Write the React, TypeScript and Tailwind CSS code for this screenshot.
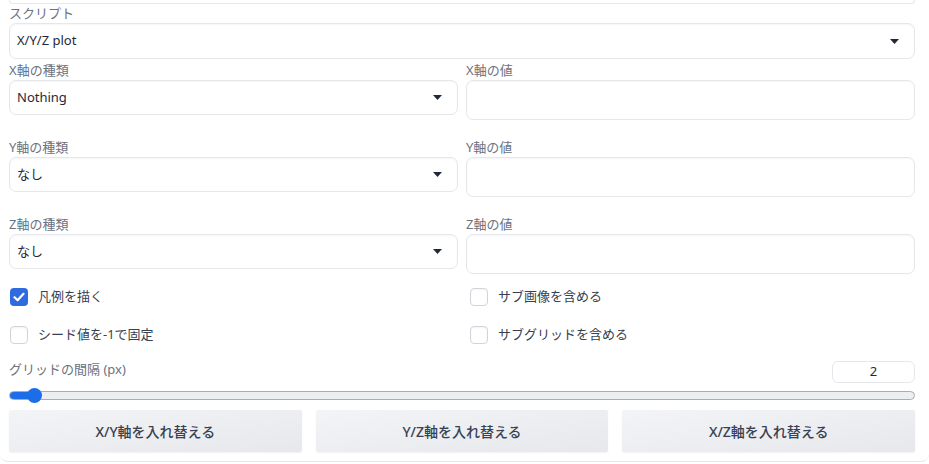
import { useState } from 'react'

const FONT = { fontFamily: '"Noto Sans", "Noto Sans CJK JP", sans-serif' }

// ── Small pieces ──────────────────────────────────────────────────────────────

function Caret() {
  return (
    <svg width="9" height="5" viewBox="0 0 9 5" aria-hidden>
      <path d="M0 0 L9 0 L4.5 5 Z" fill="#1f2937" />
    </svg>
  )
}

function Dropdown({ value, h = 'h-[35px]' }: { value: string; h?: string }) {
  return (
    <div
      className={`${h} flex items-center justify-between rounded-[7px] border border-[#e5e7eb] bg-white pl-[7px] pr-[15px] shadow-[inset_0_1px_2px_rgba(0,0,0,0.04)]`}
    >
      <span className="text-[13px] text-[#1f2937]">{value}</span>
      <Caret />
    </div>
  )
}

function Label({ children }: { children: React.ReactNode }) {
  return (
    <div className="h-[20px] text-[13px] leading-[20px] text-[#6b7280]">{children}</div>
  )
}

function Check({ label, checked }: { label: string; checked?: boolean }) {
  const [on, setOn] = useState(!!checked)
  return (
    <label className="flex h-[18px] items-center gap-[10px] cursor-pointer" onClick={() => setOn(!on)}>
      {on ? (
        <span className="flex h-[18px] w-[18px] items-center justify-center rounded-[4px] bg-[#2f6ae0]">
          <svg width="12" height="10" viewBox="0 0 12 10" aria-hidden>
            <path d="M1.5 5.2 L4.6 8.2 L10.5 1.8" fill="none" stroke="white" strokeWidth="2.2" strokeLinecap="round" strokeLinejoin="round" />
          </svg>
        </span>
      ) : (
        <span className="h-[18px] w-[18px] rounded-[4px] border border-[#d1d5db] bg-white shadow-[inset_0_1px_2px_rgba(0,0,0,0.05)]" />
      )}
      <span className="text-[13px] text-[#374151]">{label}</span>
    </label>
  )
}

function SwapButton({ label }: { label: string }) {
  return (
    <button className="h-[42px] rounded-[2px] bg-gradient-to-br from-[#f3f4f6] to-[#e7e8ec] text-[14px] font-medium text-[#374151] shadow-[0_1px_2px_rgba(0,0,0,0.06)]">
      {label}
    </button>
  )
}

// ── Axis rows ─────────────────────────────────────────────────────────────────

const AXES = [
  { axis: 'X', value: 'Nothing' },
  { axis: 'Y', value: 'なし' },
  { axis: 'Z', value: 'なし' },
]

export default function App() {
  return (
    <div className="h-[464px] w-[929px] bg-white" style={FONT}>
      <div className="border-b border-[#e5e7eb] rounded-b-[8px] pl-[9px] pr-[14px] pb-[9px]">
        {/* tail of the panel above */}
        <div className="h-[4px] rounded-b-[6px] border-x border-b border-[#e5e7eb]" />

        {/* Script */}
        <div className="h-[19px] text-[13px] leading-[19px] text-[#6b7280]">スクリプト</div>
        <Dropdown value="X/Y/Z plot" h="h-[36px]" />

        {/* Axis rows */}
        <div className="mt-[1px] flex flex-col gap-[17px]">
          {AXES.map((a) => (
            <div key={a.axis} className="grid grid-cols-2 gap-x-[8px]">
              <div>
                <Label>{a.axis}軸の種類</Label>
                <Dropdown value={a.value} />
              </div>
              <div>
                <Label>{a.axis}軸の値</Label>
                <div className="h-[40px] rounded-[7px] border border-[#e5e7eb] bg-white shadow-[inset_0_1px_2px_rgba(0,0,0,0.04)]" />
              </div>
            </div>
          ))}
        </div>

        {/* Checkboxes */}
        <div className="mt-[14px] grid grid-cols-2 gap-x-[8px] gap-y-[20px]">
          <div className="pl-[1px]"><Check label="凡例を描く" checked /></div>
          <div className="pl-[4px]"><Check label="サブ画像を含める" /></div>
          <div className="pl-[1px]"><Check label="シード値を-1で固定" /></div>
          <div className="pl-[4px]"><Check label="サブグリッドを含める" /></div>
        </div>

        {/* Grid spacing slider */}
        <div className="mt-[16px] flex h-[24px] items-start justify-between">
          <span className="text-[13px] leading-[18px] text-[#6b7280]">グリッドの間隔 (px)</span>
          <div className="mt-[1px] flex h-[22px] w-[83px] items-center justify-center rounded-[6px] border border-[#e5e7eb] bg-white text-[13px] text-[#1f2937]">
            2
          </div>
        </div>
        <div className="relative mt-[4px] h-[16px]">
          <div className="absolute left-0 right-0 top-[3px] h-[9px] rounded-full border border-[#a8acb3] bg-[#eceef1]" />
          <div className="absolute left-[1px] top-[4px] h-[7px] w-[24px] rounded-l-full bg-[#1c6ee8]" />
          <div className="absolute left-[18px] top-[0px] h-[15px] w-[15px] rounded-full bg-[#1c6ee8]" />
        </div>

        {/* Swap buttons */}
        <div className="mt-[6px] grid grid-cols-3 gap-x-[14px]">
          <SwapButton label="X/Y軸を入れ替える" />
          <SwapButton label="Y/Z軸を入れ替える" />
          <SwapButton label="X/Z軸を入れ替える" />
        </div>
      </div>
    </div>
  )
}
